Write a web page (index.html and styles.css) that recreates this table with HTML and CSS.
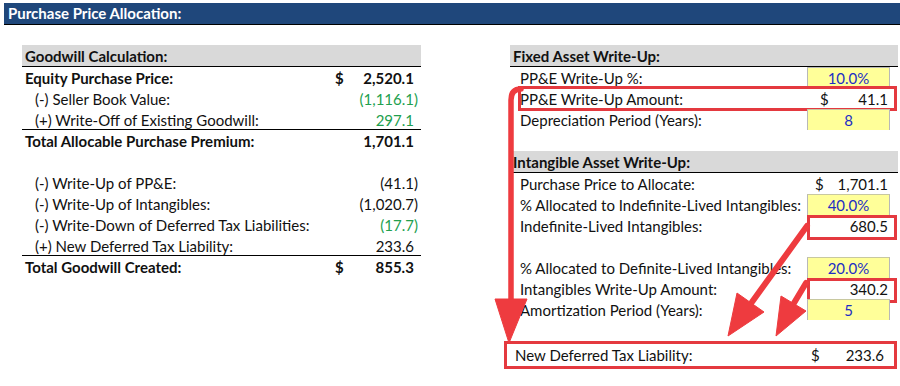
FILE: index.html
```html
<!DOCTYPE html>
<html>
<head>
<meta charset="utf-8">
<link rel="stylesheet" href="styles.css">
</head>
<body>
<div class="page">
  <div class="titlebar">Purchase Price Allocation:</div>
  <div class="content">
    <div class="left">
      <div class="sechead">Goodwill Calculation:</div>
      <div class="row bold"><span class="lbl">Equity Purchase Price:</span><span class="cur">$</span><span class="num">2,520.1<span class="pp">)</span></span></div>
      <div class="row"><span class="lbl ind">(-) Seller Book Value:</span><span class="cur"></span><span class="num green">(1,116.1)</span></div>
      <div class="row uline"><span class="lbl ind">(+) Write-Off of Existing Goodwill:</span><span class="cur"></span><span class="num green">297.1<span class="pp">)</span></span></div>
      <div class="row bold"><span class="lbl">Total Allocable Purchase Premium:</span><span class="cur"></span><span class="num">1,701.1<span class="pp">)</span></span></div>
      <div class="row"></div>
      <div class="row"><span class="lbl ind">(-) Write-Up of PP&amp;E:</span><span class="cur"></span><span class="num">(41.1)</span></div>
      <div class="row"><span class="lbl ind">(-) Write-Up of Intangibles:</span><span class="cur"></span><span class="num">(1,020.7)</span></div>
      <div class="row"><span class="lbl ind">(-) Write-Down of Deferred Tax Liabilities:</span><span class="cur"></span><span class="num green">(17.7)</span></div>
      <div class="row uline"><span class="lbl ind">(+) New Deferred Tax Liability:</span><span class="cur"></span><span class="num">233.6<span class="pp">)</span></span></div>
      <div class="row bold"><span class="lbl">Total Goodwill Created:</span><span class="cur">$</span><span class="num">855.3<span class="pp">)</span></span></div>
    </div>
    <div class="right">
      <div class="sechead">Fixed Asset Write-Up:</div>
      <div class="rrow"><span class="lbl">PP&amp;E Write-Up %:</span><span class="cell input">10.0%</span></div>
      <div class="rrow boxed"><span class="lbl">PP&amp;E Write-Up Amount:</span><span class="cell money"><span>$</span><span>41.1</span></span></div>
      <div class="rrow"><span class="lbl">Depreciation Period (Years):</span><span class="cell input">8</span></div>
      <div class="rrow"></div>
      <div class="sechead">Intangible Asset Write-Up:</div>
      <div class="rrow"><span class="lbl">Purchase Price to Allocate:</span><span class="cell money"><span>$</span><span>1,701.1</span></span></div>
      <div class="rrow"><span class="lbl">% Allocated to Indefinite-Lived Intangibles:</span><span class="cell input">40.0%</span></div>
      <div class="rrow"><span class="lbl">Indefinite-Lived Intangibles:</span><span class="cell money cellbox"><span></span><span>680.5</span></span></div>
      <div class="rrow"></div>
      <div class="rrow"><span class="lbl">% Allocated to Definite-Lived Intangibles:</span><span class="cell input">20.0%</span></div>
      <div class="rrow"><span class="lbl">Intangibles Write-Up Amount:</span><span class="cell money cellbox"><span></span><span>340.2</span></span></div>
      <div class="rrow"><span class="lbl">Amortization Period (Years):</span><span class="cell input">5</span></div>
      <div class="rrow"></div>
      <div class="dtl"><span class="lbl">New Deferred Tax Liability:</span><span class="cell money"><span>$</span><span>233.6</span></span></div>
    </div>
  </div>
  <svg class="arrows" width="900" height="386" viewBox="0 0 900 386">
    <g fill="#ee3b3f" stroke="#ee3b3f" stroke-linejoin="round">
      <path d="M521,89 Q511,89 511,100 L511,302" fill="none" stroke-width="5.5" stroke-linecap="round"/>
      <polygon points="495,299 527,299 509,343" stroke-width="1"/>
      <path d="M807,226 L752,302" fill="none" stroke-width="6" stroke-linecap="round"/>
      <polygon points="728,336 737,293 764,312" stroke-width="1"/>
      <path d="M806,283 L791,308" fill="none" stroke-width="6" stroke-linecap="round"/>
      <polygon points="776,336 781,296 806,311" stroke-width="1"/>
    </g>
  </svg>
</div>
</body>
</html>
```
FILE: styles.css
```css
*, *::before, *::after { box-sizing: border-box; }
html, body { margin: 0; padding: 0; background: #fff; }
body {
  font-family: Lato, "Open Sans", sans-serif;
  font-size: 15px;
  color: #111;
}
.page { position: relative; width: 900px; height: 386px; overflow: hidden; }
.titlebar {
  margin: 3px 0 0 4px;
  height: 22px;
  background: #1f477b;
  border-bottom: 1px solid #000;
  color: #fff;
  font-weight: bold;
  line-height: 21px;
  padding-left: 4px;
}
.content { display: flex; margin-top: 20px; }
.left { width: 399px; margin-left: 22px; }
.right { width: 388px; margin-left: 89px; }
.sechead {
  height: 22px;
  background: #d9d9d9;
  border-bottom: 1px solid #000;
  font-weight: bold;
  line-height: 22px;
  padding-left: 3px;
}
.row {
  display: grid;
  grid-template-columns: 1fr 28px 72px;
  height: 21px;
  line-height: 22px;
}
.row.bold { font-weight: bold; }
.row.uline { border-bottom: 1px solid #000; }
.lbl { padding-left: 3px; white-space: nowrap; }
.lbl.ind { padding-left: 13px; }
.cur { padding-left: 14px; }
.num { text-align: right; padding-right: 3px; white-space: nowrap; }
.pp { visibility: hidden; }
.green { color: #21a04e; }
.rrow {
  display: grid;
  grid-template-columns: 1fr 83px;
  height: 21px;
  line-height: 22px;
  margin-left: 10px;
  margin-right: 8px;
  position: relative;
}
.rrow .lbl { padding-left: 0; }
.cell { height: 21px; line-height: 22px; }
.input {
  background: #ffff99;
  border: 1px solid #b8b8b8;
  border-bottom: none;
  color: #1d2ec4;
  text-align: center;
  line-height: 20px;
}
.rrow + .rrow .input { border-top: 1px solid #c8c8a0; }
.money { display: flex; justify-content: space-between; padding: 0 2px 0 8px; }
.boxed { outline: 3px solid #e4393f; outline-offset: -1px; margin-right: 3px; }
.boxed .cell { margin-right: 5px; }
.cellbox { position: relative; }
.cellbox::after {
  content: "";
  position: absolute;
  left: 0; top: 0;
  width: 90px; height: 25px;
  border: 3px solid #e4393f;
}
.dtl {
  display: grid;
  grid-template-columns: 1fr 83px;
  margin: 0 1px 0 -6px;
  height: 28px;
  border: 3px solid #e4393f;
  line-height: 22px;
  padding: 0 8px 0 5px;
}
.arrows { position: absolute; left: 0; top: 0; pointer-events: none; }
```
